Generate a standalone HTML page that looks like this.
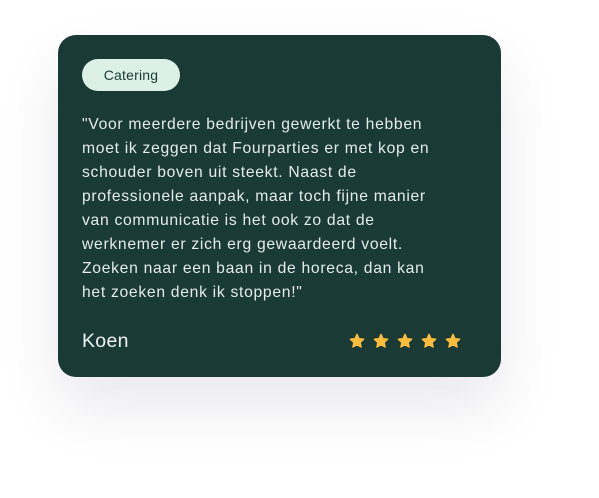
<!DOCTYPE html>
<html><head><style>
body{margin:0;width:599px;height:498px;background:#fff;position:relative;overflow:hidden;font-family:"Liberation Sans",sans-serif}
.card{position:absolute;left:58px;top:35px;width:443px;height:342px;background:#1a3a36;border-radius:18px;box-shadow:0 30px 60px rgba(40,40,80,0.10)}
.pill{position:absolute;left:24px;top:24px;width:98px;height:32px;border-radius:16px;background:#dcf0e6;color:#1a3a36;font-size:14px;line-height:32px;text-align:center;letter-spacing:0.2px}
.txt{position:absolute;left:24px;top:78px;white-space:nowrap;color:#e4ece9;font-size:15.7px;letter-spacing:0.7px;line-height:24px}
.name{position:absolute;left:24px;top:295px;color:#eef3f1;font-size:19.5px;letter-spacing:0.3px}
.stars{position:absolute;left:291px;top:298px;display:flex;gap:8px}
</style></head><body>
<div class="card">
<div class="pill">Catering</div>
<div class="txt">"Voor meerdere bedrijven gewerkt te hebben<br>moet ik zeggen dat Fourparties er met kop en<br>schouder boven uit steekt. Naast de<br>professionele aanpak, maar toch fijne manier<br>van communicatie is het ook zo dat de<br>werknemer er zich erg gewaardeerd voelt.<br>Zoeken naar een baan in de horeca, dan kan<br>het zoeken denk ik stoppen!"</div>
<div class="name">Koen</div>
<div class="stars">
<svg width="16" height="16" viewBox="0 0 24 24"><path fill="#fbbc3c" stroke="#fbbc3c" stroke-width="2" stroke-linejoin="round" d="M12 2l3 6.5 7 .8-5.2 4.8 1.4 7L12 17.6 5.8 21.1l1.4-7L2 9.3l7-.8z"/></svg>
<svg width="16" height="16" viewBox="0 0 24 24"><path fill="#fbbc3c" stroke="#fbbc3c" stroke-width="2" stroke-linejoin="round" d="M12 2l3 6.5 7 .8-5.2 4.8 1.4 7L12 17.6 5.8 21.1l1.4-7L2 9.3l7-.8z"/></svg>
<svg width="16" height="16" viewBox="0 0 24 24"><path fill="#fbbc3c" stroke="#fbbc3c" stroke-width="2" stroke-linejoin="round" d="M12 2l3 6.5 7 .8-5.2 4.8 1.4 7L12 17.6 5.8 21.1l1.4-7L2 9.3l7-.8z"/></svg>
<svg width="16" height="16" viewBox="0 0 24 24"><path fill="#fbbc3c" stroke="#fbbc3c" stroke-width="2" stroke-linejoin="round" d="M12 2l3 6.5 7 .8-5.2 4.8 1.4 7L12 17.6 5.8 21.1l1.4-7L2 9.3l7-.8z"/></svg>
<svg width="16" height="16" viewBox="0 0 24 24"><path fill="#fbbc3c" stroke="#fbbc3c" stroke-width="2" stroke-linejoin="round" d="M12 2l3 6.5 7 .8-5.2 4.8 1.4 7L12 17.6 5.8 21.1l1.4-7L2 9.3l7-.8z"/></svg>
</div>
</div>
</body></html>
